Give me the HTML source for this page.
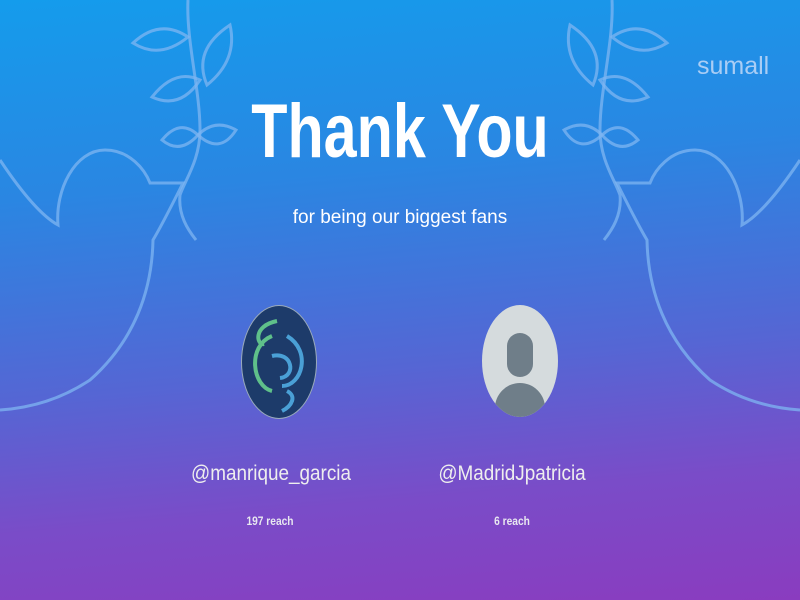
<!DOCTYPE html>
<html><head><style>
html,body{margin:0;padding:0}
body{width:800px;height:600px;position:relative;overflow:hidden;font-family:"Liberation Sans",sans-serif;color:#fff;
background:linear-gradient(175deg,#149cec 0%,#2a86e2 30%,#5566d4 60%,#7a4cc8 80%,#8a3cbf 100%);}
.t{position:absolute;left:0;width:800px;text-align:center}
svg{position:absolute;left:0;top:0}
</style></head><body>
<svg width="800" height="600" viewBox="0 0 800 600" fill="none" stroke="#7fb6f2" stroke-opacity="0.75" stroke-width="3">
<g id="d">
<path d="M188 0 C186 40 200 90 200 130 C200 160 185 180 180 195 C178 215 188 230 196 240"/>
<path d="M133 43 Q160 18 188 37 Q160 60 133 43 Z"/>
<path d="M230 25 Q238 60 207 85 Q192 50 230 25 Z"/>
<path d="M152 97 Q175 68 200 80 Q180 110 152 97 Z"/>
<path d="M162 140 Q180 118 198 135 Q180 155 162 140 Z"/>
<path d="M198 135 Q215 118 236 130 Q220 155 198 135 Z"/>
<path d="M0 160 C20 190 40 215 58 225 C55 190 75 150 105 150 C130 150 145 170 150 183 L183 183 C172 205 162 225 153 240 C152 290 135 340 90 380 C60 400 30 408 0 410"/>
</g>
<use href="#d" transform="translate(800,0) scale(-1,1)"/>
</svg>
<div style="position:absolute;left:697px;top:52px;font-size:25px;color:#a9cdf5">sumall</div>
<div class="t" style="top:88px;font-size:76px;font-weight:bold;transform:scaleX(0.78)">Thank You</div>
<div class="t" style="top:207px;font-size:19px">for being our biggest fans</div>
<div style="position:absolute;left:241px;top:305px;width:74px;height:112px;border-radius:50%;background:#1d3b6a;border:1px solid #9ab;overflow:hidden">
<svg width="74" height="112" viewBox="0 0 74 112" stroke-width="4" fill="none">
<path d="M35 15 C10 20 15 40 22 38" stroke="#5fc08a"/>
<path d="M30 30 C5 40 10 80 30 85" stroke="#5fc08a"/>
<path d="M45 30 C70 45 60 80 40 80" stroke="#4aa0d6"/>
<path d="M30 50 C50 45 55 70 38 72" stroke="#4aa0d6"/>
<path d="M45 85 C55 90 50 100 40 105" stroke="#4aa0d6"/>
</svg></div>
<div style="position:absolute;left:482px;top:305px;width:76px;height:112px;border-radius:50%;background:#d5dbdd;overflow:hidden">
<div style="position:absolute;left:25px;top:28px;width:26px;height:44px;border-radius:13px;background:#6f7e89"></div>
<div style="position:absolute;left:13px;top:78px;width:50px;height:40px;border-radius:25px 25px 0 0;background:#6f7e89"></div>
</div>
<div style="position:absolute;left:131px;width:280px;text-align:center;top:462px;font-size:21px;color:#eee;transform:scaleX(0.9)">@manrique_garcia</div>
<div style="position:absolute;left:372px;width:280px;text-align:center;top:462px;font-size:21px;color:#eee;transform:scaleX(0.9)">@MadridJpatricia</div>
<div style="position:absolute;left:170px;width:200px;text-align:center;top:514px;font-size:12px;font-weight:bold;color:#e8e8f0;transform:scaleX(0.85)">197 reach</div>
<div style="position:absolute;left:412px;width:200px;text-align:center;top:514px;font-size:12px;font-weight:bold;color:#e8e8f0;transform:scaleX(0.85)">6 reach</div>
</body></html>
